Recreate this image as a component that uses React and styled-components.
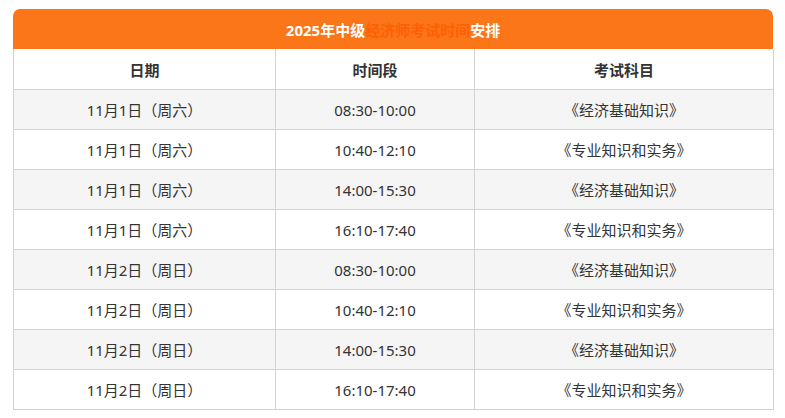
import React from 'react'
import styled, { createGlobalStyle } from 'styled-components'

const Global = createGlobalStyle`
  body {
    margin: 0;
    background: #fff;
    font-family: "Noto Sans", "Noto Sans CJK SC", sans-serif;
  }
`

const Wrap = styled.div`
  padding: 9px 12px 0 13px;
  width: 760px;
`

const Title = styled.div`
  height: 40px;
  background: #fb7519;
  border-radius: 7px 7px 0 0;
  color: #fff;
  font-size: 15px;
  font-weight: 700;
  display: flex;
  align-items: center;
  justify-content: center;

  & .hidden {
    color: #ff5f05;
  }
`

const Table = styled.table`
  width: 760px;
  border-collapse: collapse;
  table-layout: fixed;
  font-size: 15px;
  color: #333;
`

const Th = styled.th`
  height: 40px;
  border: 1px solid #d2d2d2;
  border-top: none;
  font-weight: 700;
  text-align: center;
  padding: 0;
`

const Row = styled.tr`
  background: ${p => (p.$alt ? '#f5f5f5' : '#fff')};
`

const Td = styled.td`
  height: 39px;
  border: 1px solid #d2d2d2;
  text-align: center;
  padding: 0;
`

const rows = [
  ['11月1日（周六）', '08:30-10:00', '《经济基础知识》'],
  ['11月1日（周六）', '10:40-12:10', '《专业知识和实务》'],
  ['11月1日（周六）', '14:00-15:30', '《经济基础知识》'],
  ['11月1日（周六）', '16:10-17:40', '《专业知识和实务》'],
  ['11月2日（周日）', '08:30-10:00', '《经济基础知识》'],
  ['11月2日（周日）', '10:40-12:10', '《专业知识和实务》'],
  ['11月2日（周日）', '14:00-15:30', '《经济基础知识》'],
  ['11月2日（周日）', '16:10-17:40', '《专业知识和实务》'],
]

export default function App() {
  return (
    <Wrap>
      <Global />
      <Title>
        2025年中级<span className="hidden">经济师考试时间</span>安排
      </Title>
      <Table>
        <colgroup>
          <col style={{ width: '262px' }} />
          <col style={{ width: '199px' }} />
          <col style={{ width: '299px' }} />
        </colgroup>
        <thead>
          <tr>
            <Th>日期</Th>
            <Th>时间段</Th>
            <Th>考试科目</Th>
          </tr>
        </thead>
        <tbody>
          {rows.map((r, i) => (
            <Row key={i} $alt={i % 2 === 0}>
              {r.map((c, j) => (
                <Td key={j}>{c}</Td>
              ))}
            </Row>
          ))}
        </tbody>
      </Table>
    </Wrap>
  )
}
